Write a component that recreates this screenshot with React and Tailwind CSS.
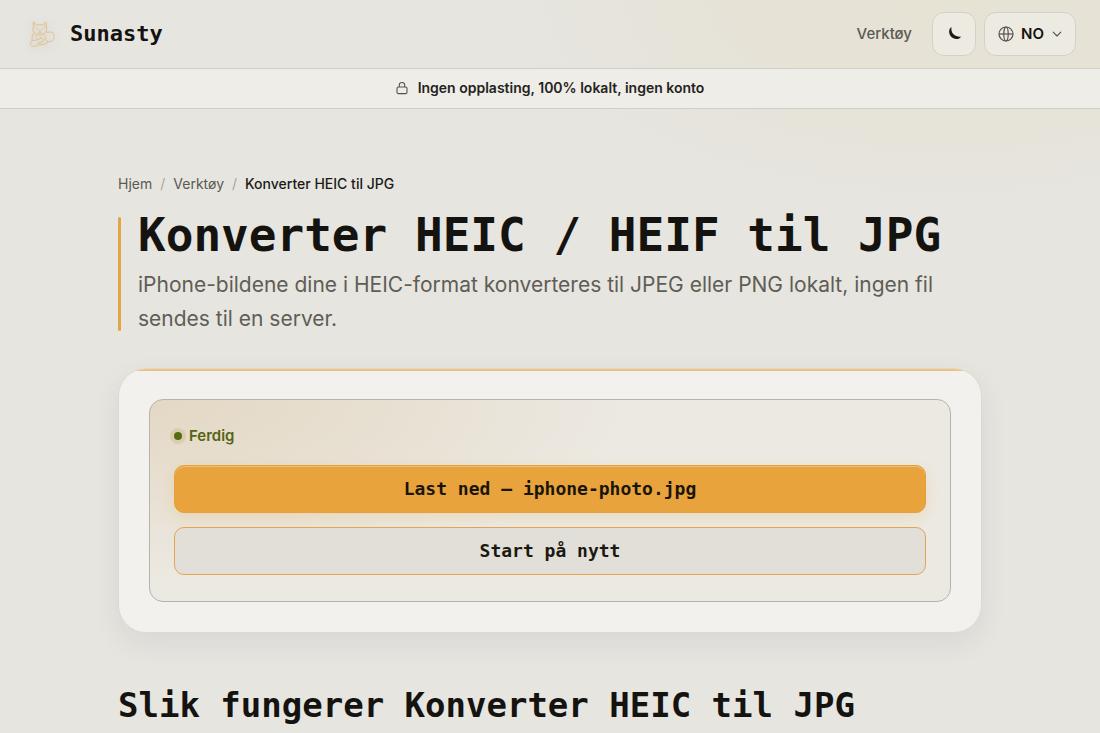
import React, { useState } from 'react'

const mono = 'font-["DejaVu_Sans_Mono",monospace]'

// logo: liggende katt i strektegning
const CatLogo = () => (
  <svg viewBox="0 0 28 28" className="size-7 shrink-0 drop-shadow-[0_2px_5px_rgba(120,100,60,0.25)]" fill="none" stroke="#e6bb80" strokeWidth="0.9" strokeLinecap="round" strokeLinejoin="round" aria-hidden="true">
    <path d="M5.5 2 L5 8.5 C4.5 12 7 14.5 11.5 14.5 C16 14.5 19 12 18.5 8.5 L18 2 L14.5 5 C12.5 4.4 11 4.4 9 5 Z" />
    <path d="M6.5 4 L7 7 M17 4 L16.5 7" strokeWidth="0.6" />
    <path d="M8.5 8.8 L10 9.2 M13.8 9.2 L15.3 8.8 M11.3 10.8 L12.5 10.8 M11.9 11 L11.9 12 M10.5 12.4 Q11.9 13.2 13.2 12.4" strokeWidth="0.7" />
    <path d="M6 13 C4 16 3.5 18.5 4.2 20.5 C2 22 2 25 3.8 26 C6 27 9 25.8 11.5 24.8 C15 24.6 18.5 23.5 20.5 21.5" />
    <path d="M18 12 C20 13 21 12 23 12 C26 12.4 26.8 16 26 18.5 C25 21.4 22 22 20 21.5 C17.5 21 16.5 19 18 17.5" />
    <path d="M4.2 20.5 C7 20.8 10 19.5 13 18.5 C15.5 18 16.5 20 15 21.2 L9.5 23.8" />
    <path d="M8 15.5 L8.5 18.5 M12 15.5 L12.5 17.5 M16 14.5 L17.5 17" strokeWidth="0.6" />
  </svg>
)

const MoonIcon = () => (
  <svg viewBox="0 0 16 16" className="size-4" aria-hidden="true">
    <path d="M5.4 1 C3.8 2 2.9 4 3.2 6.6 C3.6 10.2 6.5 12.9 10.2 13 C12.5 13 14.4 12 15.2 10.4 C13.4 10.9 11 10.6 9.1 9.5 C6.3 7.9 4.9 5 5.4 1 Z" fill="#1c1b17" />
  </svg>
)

const GlobeIcon = () => (
  <svg viewBox="0 0 16 16" className="size-4" fill="none" stroke="#55534c" strokeWidth="1.2" aria-hidden="true">
    <circle cx="8" cy="8" r="7" />
    <ellipse cx="8" cy="8" rx="2.2" ry="7" />
    <path d="M1 8 H15" />
  </svg>
)

const ChevronIcon = () => (
  <svg viewBox="0 0 10 10" className="size-[10px]" fill="none" stroke="#55534c" strokeWidth="1.1" strokeLinecap="round" strokeLinejoin="round" aria-hidden="true">
    <path d="M1.2 3.2 L5 7 L8.8 3.2" />
  </svg>
)

const LockIcon = () => (
  <svg viewBox="0 0 12 14" className="w-3 h-[14px]" fill="none" stroke="#55534c" strokeWidth="1.1" strokeLinejoin="round" aria-hidden="true">
    <rect x="1" y="6" width="10" height="6.6" rx="1.4" />
    <path d="M3.3 6 V4.2 A2.7 2.7 0 0 1 8.7 4.2 V6" />
  </svg>
)

function Header() {
  const [dark, setDark] = useState(false)

  return (
    <header className="flex items-center justify-between h-[69px] px-6 border-b border-[#cfcec8]">
      <a href="#" className="flex items-center gap-[14px] pl-1">
        <CatLogo />
        <span className={`${mono} text-[22px] leading-7 font-bold`}>Sunasty</span>
      </a>
      <nav className="flex items-center gap-2">
        <a href="#verktoy" className="mr-3 text-[15px] font-medium text-[#5b5952]">Verktøy</a>
        <button type="button" aria-label="Bytt tema" aria-pressed={dark} onClick={() => setDark(!dark)} className="flex items-center justify-center size-11 rounded-xl border border-[#d3d1c7] bg-[#edeae2]">
          <MoonIcon />
        </button>
        <button type="button" aria-label="Språk: NO" className="flex items-center h-11 w-[92px] pl-[13px] rounded-xl border border-[#d3d1c7] bg-[#edeae2] text-[15px] font-semibold">
          <GlobeIcon />
          <span className="ml-[7px] mr-2">NO</span>
          <ChevronIcon />
        </button>
      </nav>
    </header>
  )
}

function Breadcrumb() {
  return (
    <nav aria-label="Brødsmuler" className="flex items-center gap-2 text-sm text-[#5b5952]">
      <a href="#">Hjem</a>
      <span className="text-[#a9a79f]">/</span>
      <a href="#verktoy">Verktøy</a>
      <span className="text-[#a9a79f]">/</span>
      <span className="font-medium text-[#1c1b17]">Konverter HEIC til JPG</span>
    </nav>
  )
}

// ferdig-panelet med nedlasting og ny start
function ResultCard() {
  return (
    <section className="relative overflow-hidden mt-8 p-[30px] rounded-[28px] border border-[#dcdad3] bg-[#f2f1ed] shadow-[0_10px_28px_rgba(60,55,35,0.08)]">
      <div className="absolute inset-x-0 top-0 h-[2px] bg-[#efc07c]" />
      <div className="px-6 pt-6 pb-[26px] rounded-[14px] border border-[#b5b3ad] bg-[#ece9e2] bg-[radial-gradient(ellipse_60%_90%_at_0%_0%,#e4d8c5_0%,#e7dfd0_45%,#ece9e200_100%)]">
        <p role="status" className="flex items-center gap-[7px] h-6 text-[15px] font-semibold text-[#556414]">
          <span className="size-2 rounded-full bg-[#556b12] shadow-[0_0_0_4px_rgba(190,160,100,0.25)]" />
          Ferdig
        </p>
        <button type="button" className={`${mono} block w-full h-12 mt-[17px] rounded-[10px] border border-[#e3a03c] bg-[#e8a33d] text-lg leading-6 font-bold text-[#1a1508] shadow-[inset_0_1px_0_rgba(255,255,255,0.3),0_5px_14px_rgba(232,163,61,0.2)]`}>
          Last ned — iphone-photo.jpg
        </button>
        <button type="button" className={`${mono} block w-full h-12 mt-[14px] rounded-[10px] border border-[#e2a652] bg-[#e2dfd8] text-lg leading-6 font-bold text-[#1a1810]`}>
          Start på nytt
        </button>
      </div>
    </section>
  )
}

export default function App() {
  return (
    <div className="min-h-screen bg-[#e6e5e0] bg-[radial-gradient(ellipse_440px_210px_at_86%_0px,#e6e2d4_0%,#e6e2d6_45%,#e6e5e000_100%)] bg-no-repeat font-[Inter,sans-serif] text-[#14130f]">
      <Header />
      <div className="flex items-center justify-center gap-[10px] h-10 pb-px border-b border-[#cfcec8] bg-[#eeede8] text-sm font-semibold text-[#24231e]">
        <LockIcon />
        Ingen opplasting, 100% lokalt, ingen konto
      </div>

      <main className="max-w-[912px] mx-auto px-6 pt-[65px]">
        <Breadcrumb />
        <div className="relative mt-[18px] pl-5">
          <span className="absolute left-0 inset-y-[5px] w-[3px] rounded-full bg-[#e3a348]" />
          <h1 className={`${mono} text-[46px] leading-[46px] font-bold`}>Konverter HEIC / HEIF til JPG</h1>
          <p className="mt-[10px] max-w-[820px] text-[21px] leading-[34px] text-[#5f5d56]">
            iPhone-bildene dine i HEIC-format konverteres til JPEG eller PNG lokalt, ingen fil sendes til en server.
          </p>
        </div>
        <ResultCard />
        <h2 className={`${mono} mt-[52px] text-[34px] leading-10 font-bold`}>Slik fungerer Konverter HEIC til JPG</h2>
      </main>
    </div>
  )
}
